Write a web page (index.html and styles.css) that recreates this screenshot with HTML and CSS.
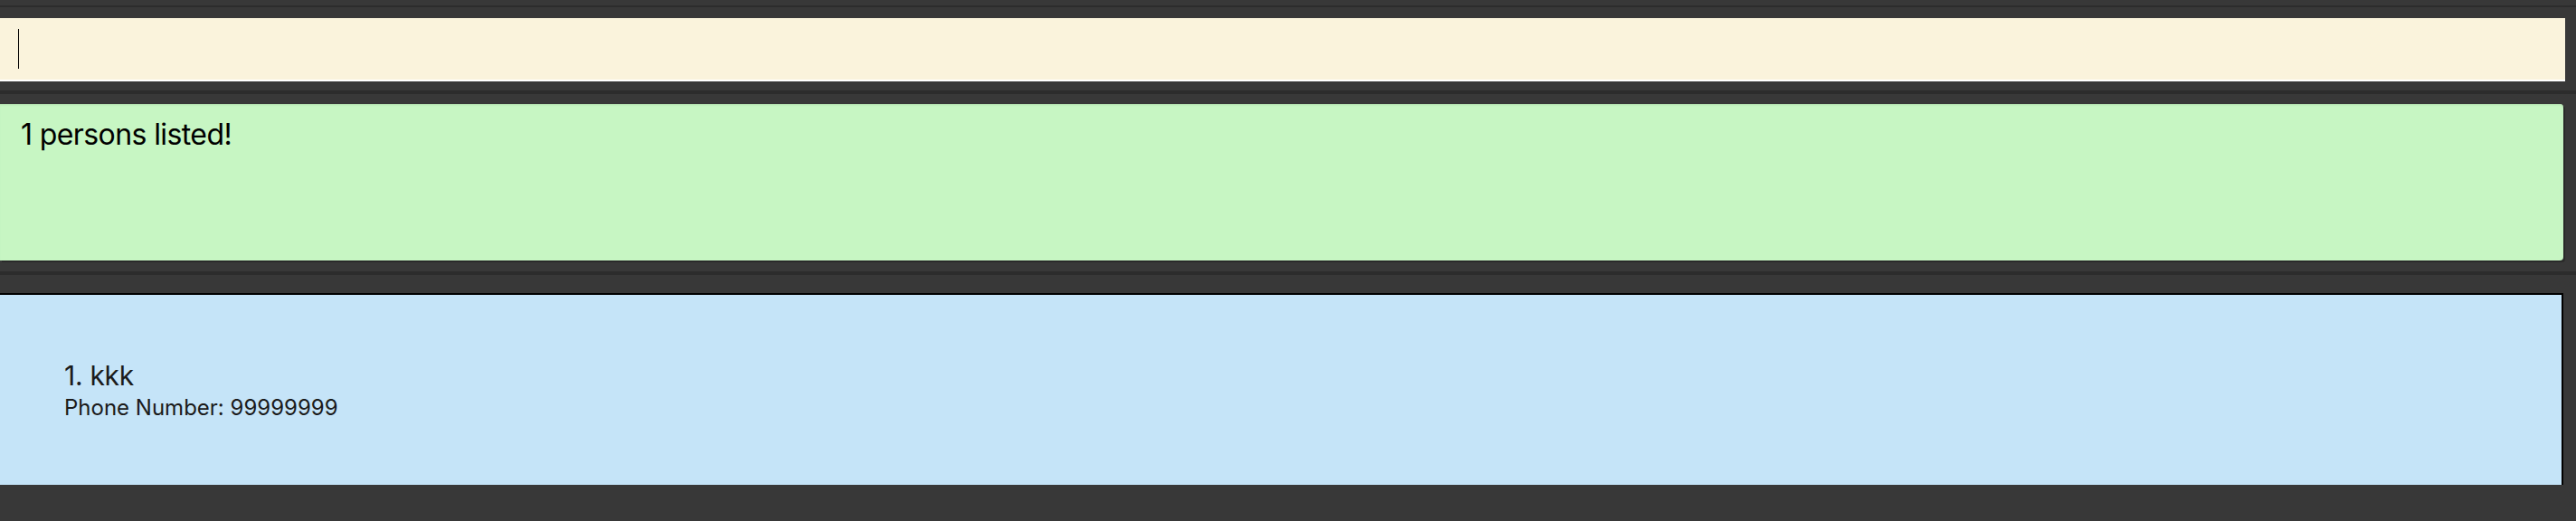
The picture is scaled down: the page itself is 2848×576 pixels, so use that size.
FILE: index.html
```html
<!DOCTYPE html>
<html>
<head>
<meta charset="utf-8">
<link rel="stylesheet" href="styles.css">
</head>
<body>
<div class="app">
  <div class="divider top"></div>
  <div class="command-pane">
    <div class="command-box"><span class="caret"></span></div>
  </div>
  <div class="divider"></div>
  <div class="result-pane">
    <div class="result-box">1 persons listed!</div>
  </div>
  <div class="divider"></div>
  <div class="list-pane">
    <div class="card">
      <div class="name">1. kkk</div>
      <div class="phone">Phone Number: 99999999</div>
    </div>
  </div>
</div>
</body>
</html>
```
FILE: styles.css
```css
html, body {
  margin: 0;
  padding: 0;
  background: #383838;
  overflow: hidden;
}
.app {
  width: 2848px;
  height: 576px;
  display: flex;
  flex-direction: column;
  font-family: Inter, "Noto Sans", sans-serif;
  overflow: hidden;
}
.divider {
  height: 4px;
  background: #2c2c2c;
  flex: none;
}
.divider.top {
  height: 2px;
  margin-top: 6px;
}
.command-pane {
  padding: 12px 14px 10px 0;
}
.command-box {
  height: 68px;
  background: #faf3dc;
  border-bottom: 2px solid #ffffff;
  margin-right: -2px;
  padding-right: 2px;
  box-sizing: content-box;
  display: flex;
  align-items: center;
  padding-left: 20px;
}
.caret {
  width: 1px;
  height: 44px;
  background: #000;
}
.result-pane {
  padding: 11px 14px 12px 0;
}
.result-box {
  background: #c7f6c3;
  border-radius: 0 4px 4px 0;
  box-shadow: inset 0 2px 2px -1px #b0dcac, 2px 2px 0 #2a2a2a;
  padding: 14px 0 0 23px;
  font-size: 32px;
  letter-spacing: -0.6px;
  line-height: 39px;
  color: #000;
  box-sizing: border-box;
  height: 173px;
}
.list-pane {
  padding: 20px 14px 0 0;
  flex: 1;
}
.card {
  height: 210px;
  background: #c5e4f8;
  border-top: 2px solid #000;
  border-right: 2px solid #000;
  padding-left: 71px;
  display: flex;
  flex-direction: column;
  justify-content: center;
  color: #1b1b1b;
}
.name {
  font-size: 30px;
  line-height: 36px;
  letter-spacing: -0.3px;
}
.phone {
  font-size: 24px;
  line-height: 30px;
  margin-top: 3px;
}
```
